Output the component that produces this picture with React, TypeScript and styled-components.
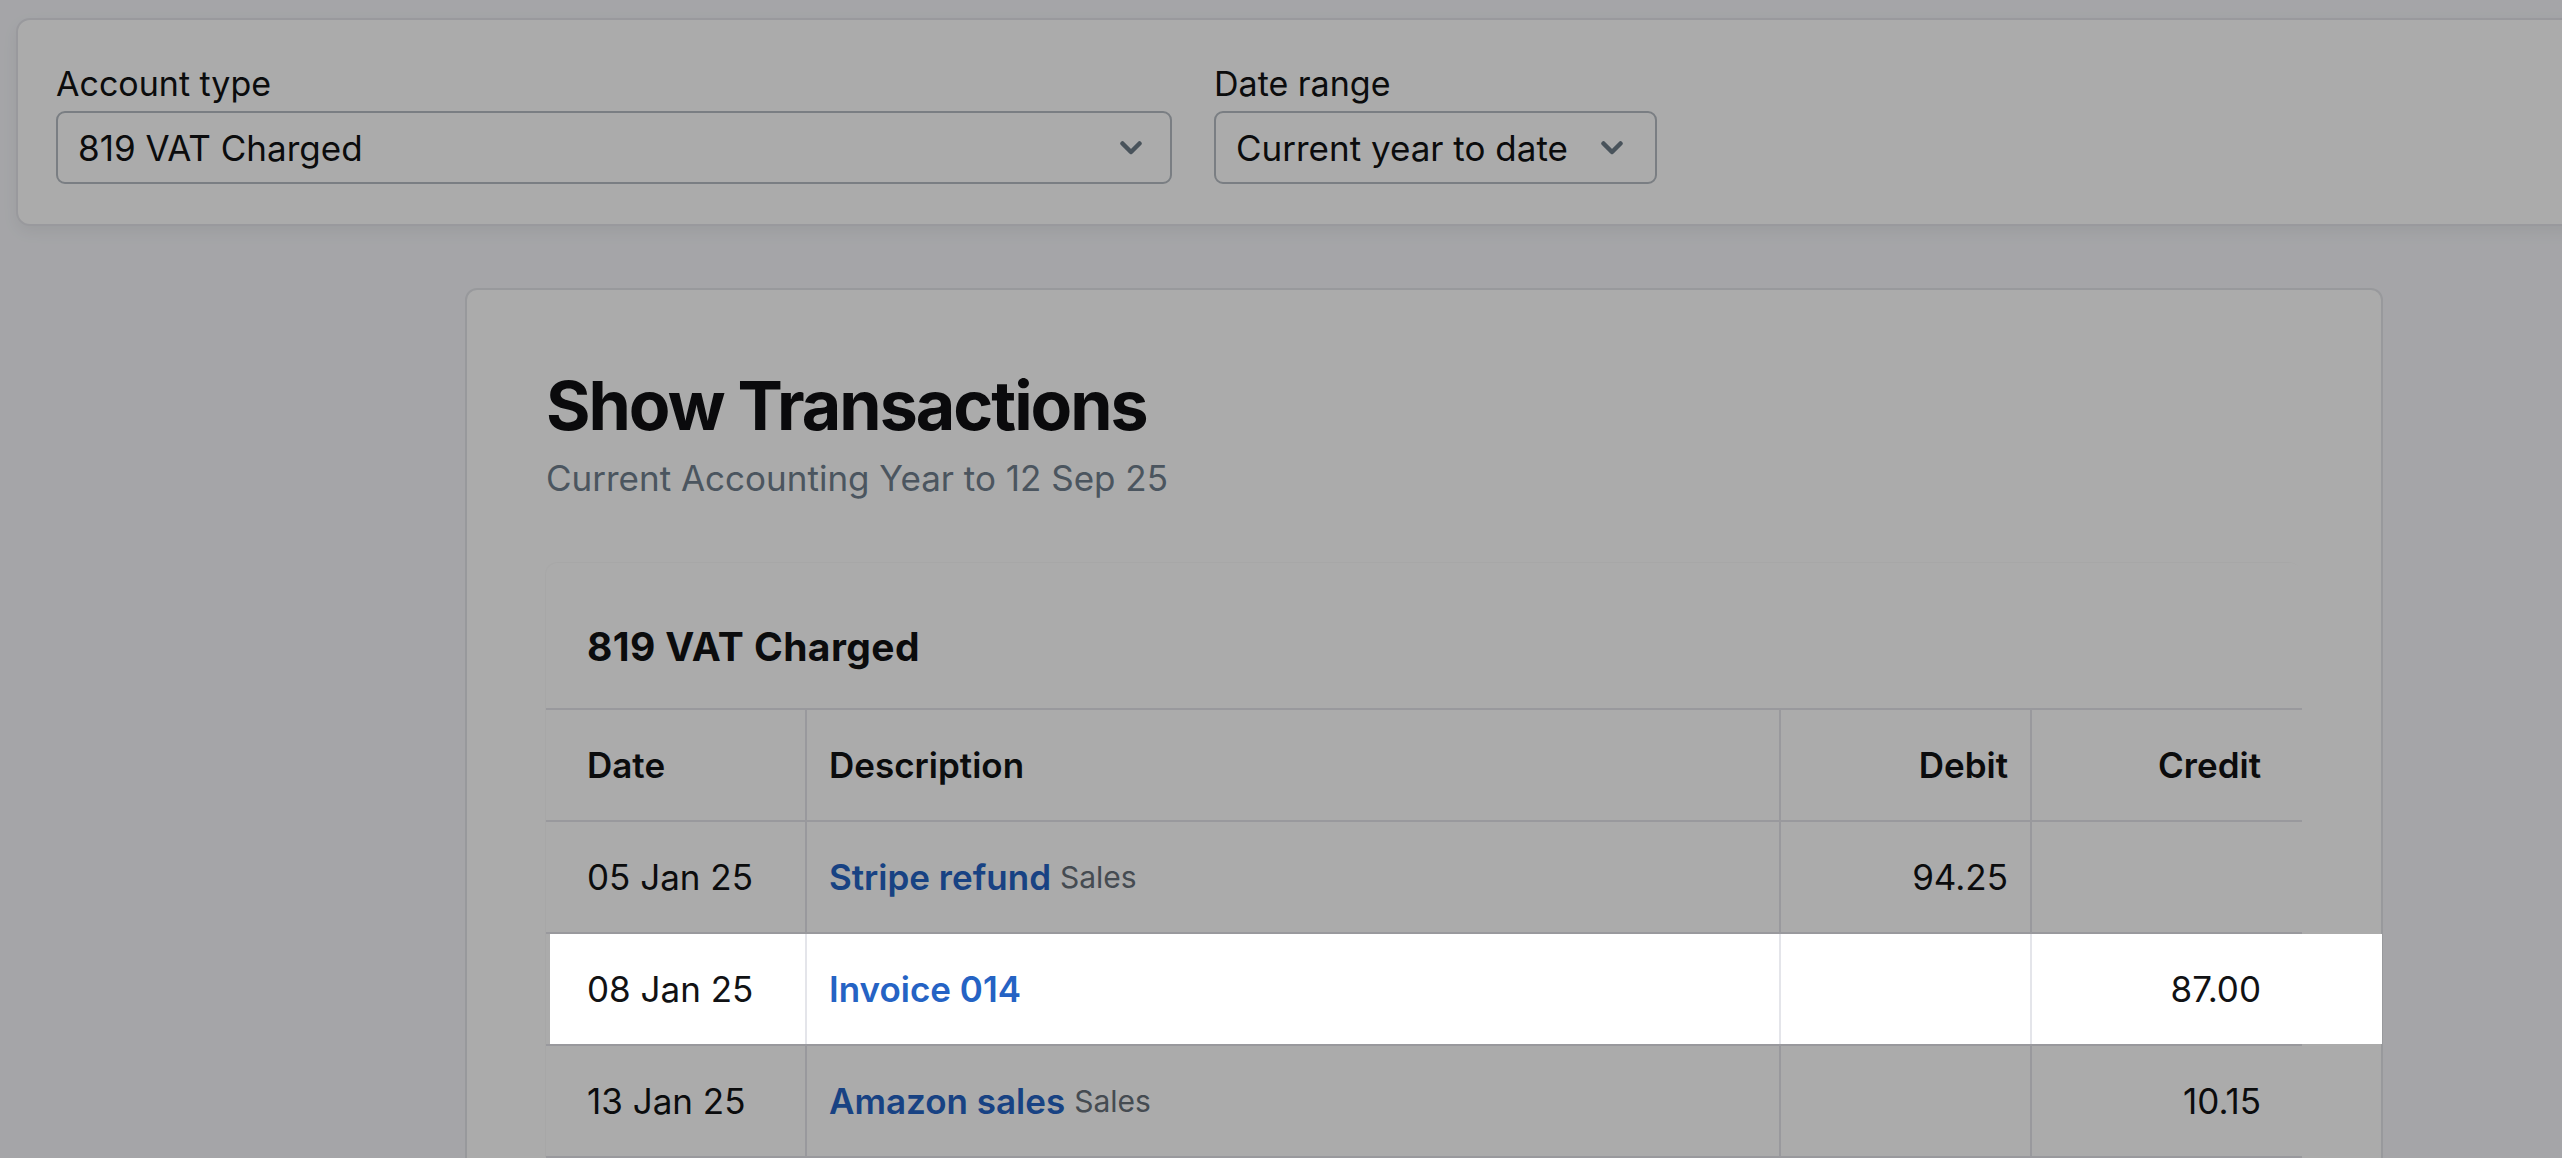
import React from 'react'
import styled, { createGlobalStyle } from 'styled-components'

const GlobalStyle = createGlobalStyle`
    html, body {
        margin: 0;
        padding: 0;
        background: #f6f7fb;
        overflow: hidden;
        font-family: "Inter", "Noto Sans", sans-serif;
        color: #111214;
    }
`;

const Page = styled.div`
    height: 1158px;
    overflow: hidden;
    padding: 18px 0 0 16px;
    box-sizing: border-box;
`;

const FilterPanel = styled.div`
    display: flex;
    gap: 42px;
    height: 208px;
    box-sizing: border-box;
    margin-right: -40px;
    padding: 44px 0 0 38px;
    background: #ffffff;
    border: 2px solid #e4e5ea;
    border-radius: 14px;
    box-shadow: 0 6px 16px rgba(0, 0, 0, 0.06);
`;

const Field = styled.div`
    display: flex;
    flex-direction: column;
    gap: 7px;
`;

const Label = styled.label`
    font-size: 34px;
    line-height: 40px;
    color: #111214;
`;

const Select = styled.div<{ $width?: number }>`
    display: flex;
    align-items: center;
    justify-content: space-between;
    gap: 33px;
    width: ${p => (p.$width ? `${p.$width}px` : 'auto')};
    height: 73px;
    box-sizing: border-box;
    padding: 0 ${p => (p.$width ? 28 : 32)}px 0 20px;
    border: 2px solid #b6bcc3;
    border-radius: 9px;
    font-size: 35px;
    color: #111214;
    background: #ffffff;
`;

const Chevron = () => (
    <svg width="22" height="14" viewBox="0 0 22 14" fill="none">
        <path d="M2.5 2.5 L11 11 L19.5 2.5" stroke="#6e7c88" strokeWidth="4.5" strokeLinecap="round" strokeLinejoin="round" />
    </svg>
);

const Card = styled.div`
    width: 1918px;
    box-sizing: border-box;
    margin: 62px 0 0 449px;
    padding: 73px 79px 40px 79px;
    background: #ffffff;
    border: 2px solid #e3e4e9;
    border-radius: 12px;
`;

const Title = styled.h1`
    margin: 0;
    font-size: 68px;
    line-height: 84px;
    font-weight: 700;
    letter-spacing: -2px;
    color: #0f1012;
`;

const Subtitle = styled.div`
    margin-top: 10px;
    font-size: 35px;
    line-height: 43px;
    color: #707f8e;
`;

const TableBox = styled.div`
    margin-top: 63px;
    border-radius: 12px 12px 0 0;
    box-shadow: -1px -1px 0 rgba(0, 0, 0, 0.02);
`;

const BoxTitle = styled.div`
    padding: 61px 0 38px 41px;
    font-size: 39px;
    line-height: 46px;
    font-weight: 700;
    letter-spacing: 0.4px;
    color: #111214;
`;

const Row = styled.div<{ $highlight?: boolean }>`
    display: grid;
    grid-template-columns: 259px 974px 251px 1fr;
    height: 112px;
    box-sizing: border-box;
    border-top: 2px solid #e4e5ea;
    position: relative;

    &:last-child {
        height: 114px;
        border-bottom: 2px solid #e4e5ea;
    }

    ${p => p.$highlight && `
        z-index: 2;
        &::before {
            content: '';
            position: absolute;
            top: 0;
            bottom: 0;
            left: 4px;
            right: -80px;
            background: #ffffff;
            box-shadow: 0 0 0 6000px rgba(0, 0, 0, 0.33);
            z-index: -1;
        }
    `}
`;

const Cell = styled.div<{ $align?: 'left' | 'right'; $head?: boolean }>`
    display: flex;
    align-items: center;
    justify-content: ${p => (p.$align === 'right' ? 'flex-end' : 'flex-start')};
    gap: 9px;
    padding: 0 22px;
    font-size: 35px;
    font-weight: ${p => (p.$head ? 600 : 400)};
    color: #111214;
    white-space: nowrap;

    & + & {
        border-left: 2px solid #e4e5ea;
    }
    &:first-child {
        padding-left: 41px;
    }
    &:last-child {
        padding-right: 41px;
    }
`;

const Link = styled.a`
    color: #2563c4;
    font-weight: 600;
    text-decoration: none;
`;

const Tag = styled.span`
    font-size: 30px;
    color: #67707a;
`;

type Txn = { date: string; title: string; tag?: string; debit?: string; credit?: string; highlight?: boolean };

const transactions: Txn[] = [
    { date: '05 Jan 25', title: 'Stripe refund', tag: 'Sales', debit: '94.25' },
    { date: '08 Jan 25', title: 'Invoice 014', credit: '87.00', highlight: true },
    { date: '13 Jan 25', title: 'Amazon sales', tag: 'Sales', credit: '10.15' },
];

export default function App() {
    return (
        <>
            <GlobalStyle />
            <Page>
                <FilterPanel>
                    <Field>
                        <Label>Account type</Label>
                        <Select $width={1116}>
                            <span>819 VAT Charged</span>
                            <Chevron />
                        </Select>
                    </Field>
                    <Field>
                        <Label>Date range</Label>
                        <Select>
                            <span>Current year to date</span>
                            <Chevron />
                        </Select>
                    </Field>
                </FilterPanel>

                <Card>
                    <Title>Show Transactions</Title>
                    <Subtitle>Current Accounting Year to 12 Sep 25</Subtitle>
                    <TableBox>
                        <BoxTitle>819 VAT Charged</BoxTitle>
                        <Row>
                            <Cell $head>Date</Cell>
                            <Cell $head>Description</Cell>
                            <Cell $head $align="right">Debit</Cell>
                            <Cell $head $align="right">Credit</Cell>
                        </Row>
                        {transactions.map((t) => (
                            <Row key={t.date} $highlight={t.highlight}>
                                <Cell>{t.date}</Cell>
                                <Cell>
                                    <Link href="#">{t.title}</Link>
                                    {t.tag && <Tag>{t.tag}</Tag>}
                                </Cell>
                                <Cell $align="right">{t.debit}</Cell>
                                <Cell $align="right">{t.credit}</Cell>
                            </Row>
                        ))}
                    </TableBox>
                </Card>
            </Page>
        </>
    );
}
